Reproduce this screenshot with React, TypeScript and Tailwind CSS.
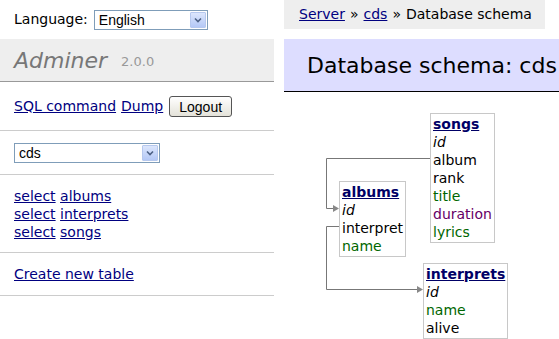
import React from "react";

const VERDANA = "font-['Verdana','DejaVu_Sans',sans-serif]";

type Col = { name: string; kind?: "pk" | "green" | "purple" };

const tables: { name: string; left: number; top: number; cols: Col[] }[] = [
  {
    name: "songs",
    left: 146,
    top: 21,
    cols: [
      { name: "id", kind: "pk" },
      { name: "album" },
      { name: "rank" },
      { name: "title", kind: "green" },
      { name: "duration", kind: "purple" },
      { name: "lyrics", kind: "green" },
    ],
  },
  {
    name: "albums",
    left: 55,
    top: 89,
    cols: [{ name: "id", kind: "pk" }, { name: "interpret" }, { name: "name", kind: "green" }],
  },
  {
    name: "interprets",
    left: 139,
    top: 171,
    cols: [{ name: "id", kind: "pk" }, { name: "name", kind: "green" }, { name: "alive" }],
  },
];

function FakeSelect({ value, width }: { value: string; width: string }) {
  return (
    <div className={`flex h-[20px] items-center border border-[#7f9db9] bg-white ${width}`}>
      <span className="flex-1 pl-[4px] font-['Liberation_Sans',Arial,sans-serif] text-[14px] leading-none text-black">{value}</span>
      <span className="mr-[1px] flex h-[16px] w-[16px] items-center justify-center rounded-[1px] border border-[#b6c8ee] bg-gradient-to-b from-[#dce6fc] to-[#b4c8f6]">
        <svg width="8" height="6" viewBox="0 0 8 6" aria-hidden="true">
          <path d="M1 1.5 L4 4.5 L7 1.5" fill="none" stroke="#4d6185" strokeWidth="1.6" />
        </svg>
      </span>
    </div>
  );
}

function SchemaTable({ name, left, top, cols }: (typeof tables)[number]) {
  return (
    <div
      className="absolute border border-[#c8c8c8] bg-white px-[2px] py-[1px] text-[14px] leading-[18px]"
      style={{ left, top }}
    >
      <a href="#" className="font-bold text-[#000066] underline">{name}</a>
      {cols.map(col => (
        <div
          key={col.name}
          className={
            col.kind === "pk"
              ? "italic text-black"
              : col.kind === "green"
                ? "text-[#006600]"
                : col.kind === "purple"
                  ? "text-[#660066]"
                  : "text-black"
          }
        >
          {col.name}
        </div>
      ))}
    </div>
  );
}

export default function App() {
  return (
    <div className={`flex h-[339px] w-[559px] overflow-hidden bg-white text-[14px] text-black ${VERDANA}`}>
      {/* menu */}
      <div className="w-[274px] shrink-0">
        <div className="flex h-[39px] items-center gap-[6px] pl-[14px]">
          <span>Language:</span>
          <FakeSelect value="English" width="w-[114px]" />
        </div>
        <div className="flex h-[43px] items-center border-b border-[#999] bg-[#eeeeee] pl-[14px]">
          <span className="text-[22px] italic text-[#777]">Adminer</span>
          <span className="ml-[14px] mt-[4px] text-[13px] text-[#999]">2.0.0</span>
        </div>
        <div className="flex h-[49px] items-center gap-[5px] border-b border-[#ccc] pl-[14px]">
          <a href="#" className="text-[#000080] underline">SQL command</a>
          <a href="#" className="text-[#000080] underline">Dump</a>
          <button className="ml-[1px] h-[21px] rounded-[3px] border border-[#555] bg-gradient-to-b from-white to-[#e4e2d9] px-[9px] font-['Liberation_Sans',Arial,sans-serif] text-[14px] text-black">
            Logout
          </button>
        </div>
        <div className="flex h-[44px] items-center border-b border-[#ccc] pl-[14px]">
          <FakeSelect value="cds" width="w-[146px]" />
        </div>
        <div className="flex h-[78px] flex-col justify-center border-b border-[#ccc] pl-[14px] leading-[18px]">
          {["albums", "interprets", "songs"].map(t => (
            <div key={t}>
              <a href="#" className="text-[#000080] underline">select</a>{" "}
              <a href="#" className="text-[#000080] underline">{t}</a>
            </div>
          ))}
        </div>
        <div className="flex h-[43px] items-center border-b border-[#ccc] pl-[14px]">
          <a href="#" className="text-[#000080] underline">Create new table</a>
        </div>
      </div>

      {/* content */}
      <div className="ml-[10px] flex-1">
        <p className="flex h-[29px] w-[261px] items-center bg-[#eeeeee] pl-[15px]">
          <a href="#" className="text-[#000080] underline">Server</a>
          <span className="mx-[5px]">»</span>
          <a href="#" className="text-[#000080] underline">cds</a>
          <span className="mx-[5px]">»</span>
          <span className="whitespace-nowrap">Database schema</span>
        </p>
        <h2 className="mt-[10px] flex h-[53px] items-center border-b border-black bg-[#ddddff] pl-[23px] text-[22px] font-normal whitespace-nowrap">
          Database schema: cds
        </h2>
        <div className="relative h-[260px]">
          <svg className="absolute left-0 top-0" width="275" height="260" aria-hidden="true">
            <g fill="none" stroke="#777" strokeWidth="1">
              <path d="M146 66.5 H42.5 V116.5 H50" />
              <path d="M55 134.5 H42.5 V197.5 H134" />
            </g>
            <g fill="#888">
              <path d="M49 113 L55 116.5 L49 120 Z" />
              <path d="M133 194 L139 197.5 L133 201 Z" />
            </g>
          </svg>
          {tables.map(t => (
            <SchemaTable key={t.name} {...t} />
          ))}
        </div>
      </div>
    </div>
  );
}
